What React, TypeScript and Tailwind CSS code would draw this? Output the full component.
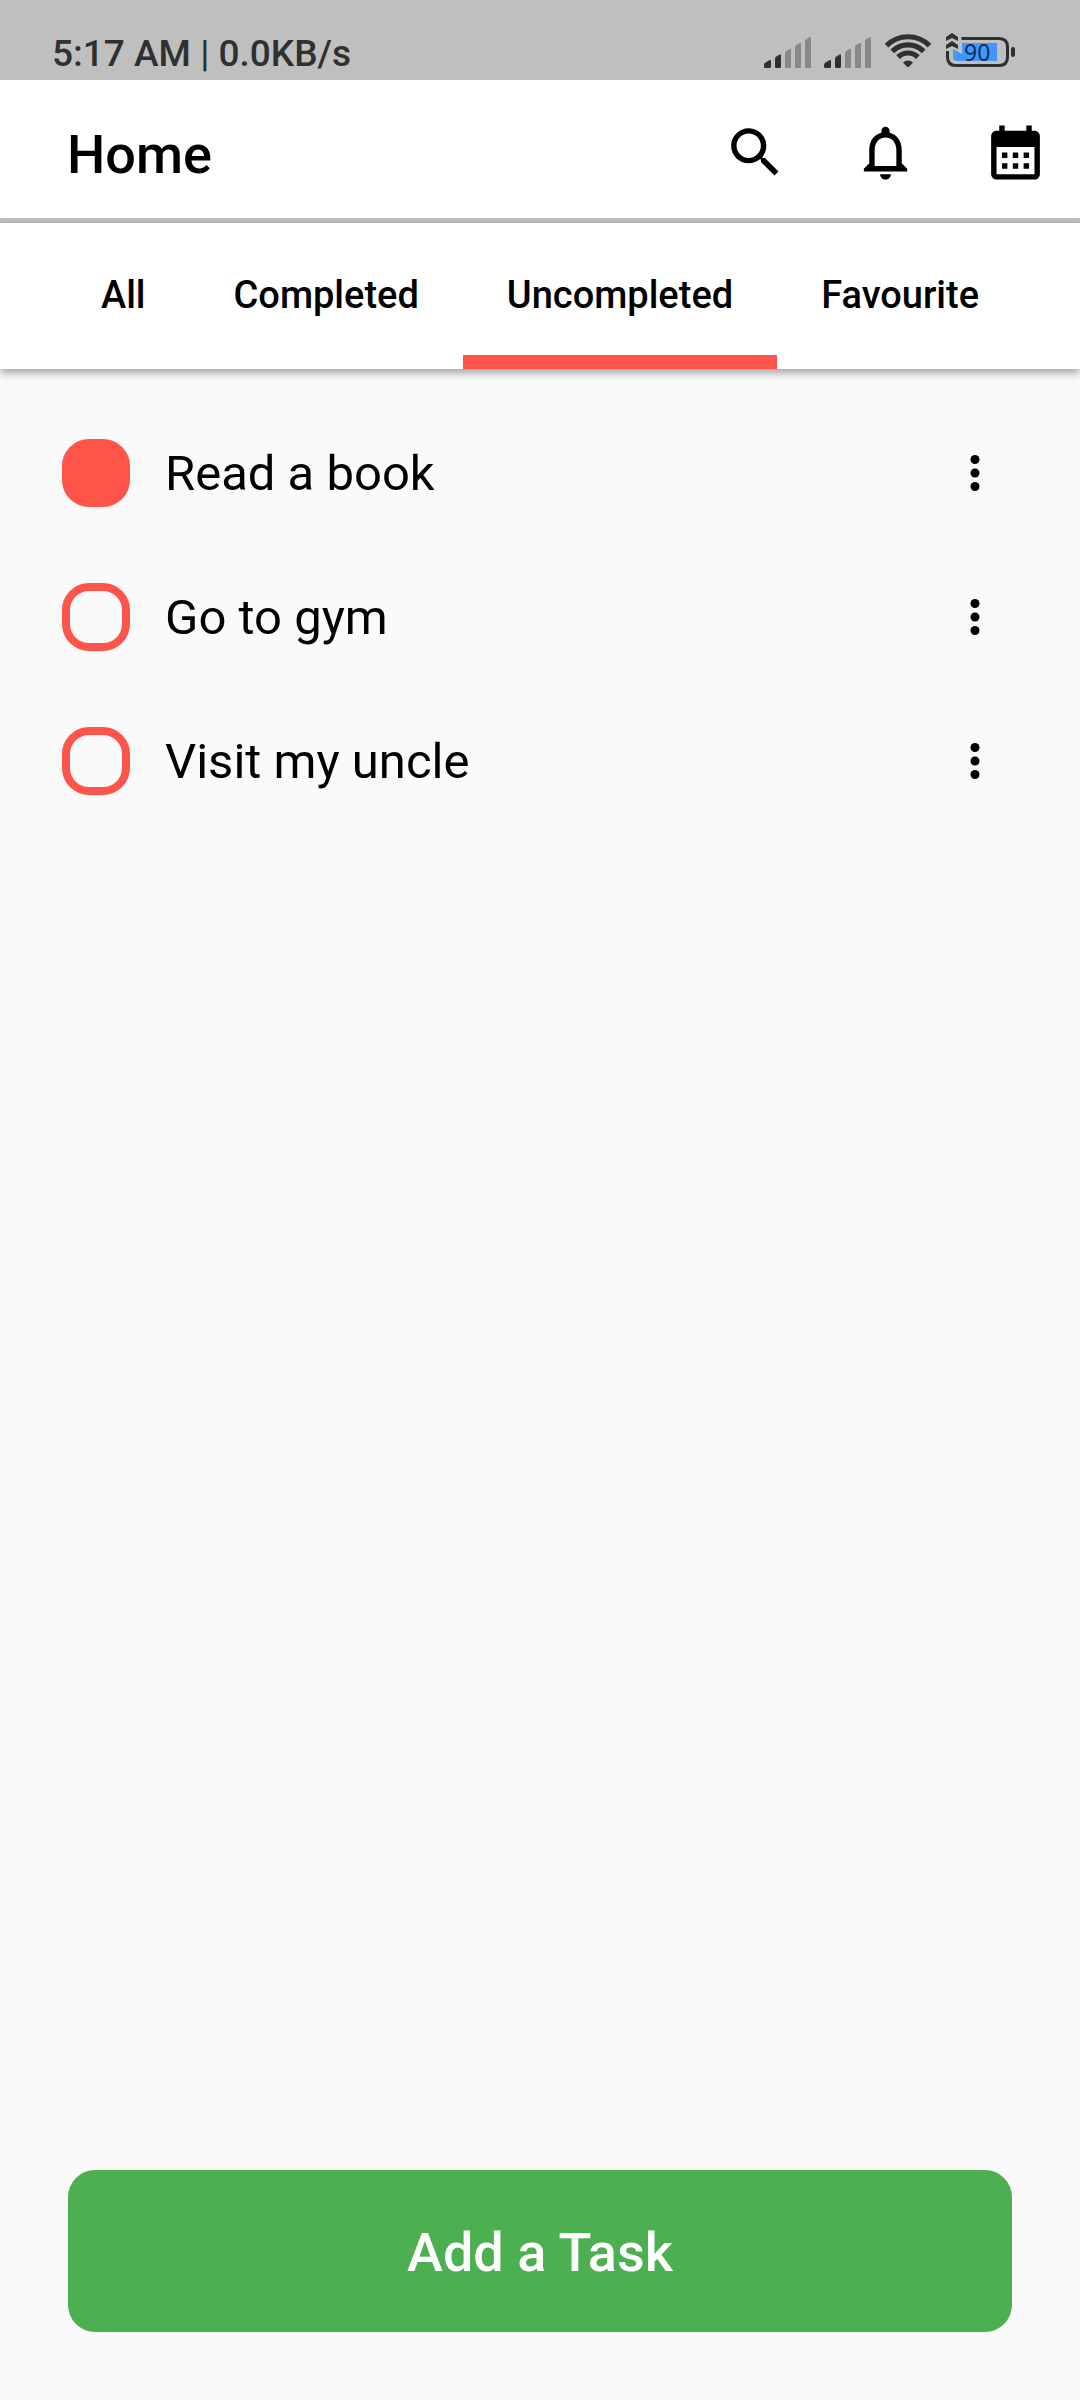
import { useState } from "react";

function Bars({ className }: { className: string }) {
  return (
    <svg viewBox="0 0 48 31" className={className} aria-hidden="true">
      <path fill="#303030" d="M0 28q0-1.500 1.200-2.300l4-2.400q1.800-.8 1.800 1v5.200q0 1.500-1.500 1.500h-4q-1.500 0-1.500-1.500z" />
      <path fill="#303030" d="M11 22q0-1.500 1-2.200l3.600-2.300q1.400-.6 1.400 1v11q0 1.500-1.500 1.500h-3q-1.500 0-1.500-1.500z" />
      <g fill="#878787">
        <path d="M21 16.500q0-1.500 1-2.200l3.600-2.300q1.400-.6 1.400 1v16.500q0 1.500-1.500 1.500h-3q-1.500 0-1.500-1.500z" />
        <path d="M31 10.500q0-1.500 1-2.200l3.600-2.300q1.400-.6 1.400 1v22.500q0 1.500-1.500 1.500h-3q-1.500 0-1.500-1.500z" />
        <path d="M41 4.500q0-1.500 1-2.200l3.600-2.100q1.400-.6 1.400 1v28.300q0 1.500-1.500 1.500h-3q-1.500 0-1.500-1.500z" />
      </g>
    </svg>
  );
}

function Wifi() {
  return (
    <svg viewBox="0 0 48 34" className="h-[34px] w-[48px]" aria-hidden="true">
      <g fill="none" stroke="#303030" strokeWidth="5.2">
        <path d="M2.600 11.600a30.300 30.300 0 0 1 42.800 0" />
        <path d="M8.300 17.300a22.200 22.200 0 0 1 31.400 0" />
        <path d="M14.100 23.100a14 14 0 0 1 19.800 0" />
      </g>
      <path fill="#303030" d="M19 28.500a7.200 7.200 0 0 1 10 0l-4 4.200q-1 .8-2 0z" />
    </svg>
  );
}

function Battery() {
  return (
    <div className="relative flex h-[36px] w-[70px] items-center">
      <svg viewBox="0 0 70 36" className="h-[36px] w-[70px]" aria-hidden="true">
        <path fill="#3f98ff" d="M7 17l9 5V11h35v18H11q-4 0-4-4z" />
        <path fill="none" stroke="#303030" strokeWidth="3" d="M15.500 6.500H53q8.500 0 8.500 8.500v10q0 8.500-8.500 8.500H10q-8.500 0-8.500-8.500V19" />
        <rect x="65" y="15" width="4" height="10" rx="2" fill="#303030" />
        <path fill="#303030" d="M0 5L6 1l6 4v4L6 6 0 9zM0 13l6-4 6 4v4l-6-3-6 3z" />
      </svg>
      <span className="absolute left-[18px] top-[8px] font-['Noto_Sans',sans-serif] text-[23px] leading-[24px] text-[#12304f]">90</span>
    </div>
  );
}

const actions = [
  {
    label: "Search",
    d: "M15.5 14h-.79l-.28-.27C15.41 12.59 16 11.11 16 9.5 16 5.91 13.09 3 9.5 3S3 5.91 3 9.5 5.91 16 9.5 16c1.61 0 3.09-.59 4.23-1.57l.27.28v.79l5 4.99L20.49 19l-4.99-5zm-6 0C7.01 14 5 11.99 5 9.5S7.01 5 9.5 5 14 7.01 14 9.5 11.99 14 9.5 14z",
  },
  {
    label: "Notifications",
    d: "M12 22c1.100 0 2-.9 2-2h-4c0 1.100.9 2 2 2zm6-6v-5c0-3.070-1.630-5.640-4.500-6.320V4c0-.83-.67-1.500-1.500-1.500s-1.500.67-1.500 1.500v.68C7.640 5.360 6 7.920 6 11v5l-2 2v1h16v-1l-2-2zm-2 1H8v-6c0-2.480 1.510-4.500 4-4.500s4 2.020 4 4.500v6z",
  },
  {
    label: "Calendar",
    d: "M19 4h-1V2h-2v2H8V2H6v2H5c-1.110 0-1.990.9-1.990 2L3 20a2 2 0 0 0 2 2h14c1.100 0 2-.9 2-2V6c0-1.100-.9-2-2-2zm0 16H5V10h14v10zM9 14H7v-2h2v2zm4 0h-2v-2h2v2zm4 0h-2v-2h2v2zm-8 4H7v-2h2v2zm4 0h-2v-2h2v2zm4 0h-2v-2h2v2z",
  },
];

const tabs = ["All", "Completed", "Uncompleted", "Favourite"];

const initialTasks = [
  { title: "Read a book", checked: true },
  { title: "Go to gym", checked: false },
  { title: "Visit my uncle", checked: false },
];

export default function App() {
  const [active, setActive] = useState("Uncompleted");
  const [tasks, setTasks] = useState(initialTasks);
  const toggle = (title: string) =>
    setTasks(tasks.map((t) => (t.title === title ? { ...t, checked: !t.checked } : t)));

  return (
    <div className="flex min-h-screen flex-col bg-[#fafafa] font-[Roboto,sans-serif] text-black">
      <div className="flex h-20 items-end justify-between bg-[#bfbfbf] pl-[52px] pr-16">
        <span className="pb-1 text-[37px] leading-[44px] font-medium text-[#303030]">5:17 AM | 0.0KB/s</span>
        <div className="flex items-end pb-3">
          <Bars className="mr-3 h-[31px] w-[48px]" />
          <Bars className="mr-3 h-[31px] w-[48px]" />
          <Wifi />
          <div className="ml-3.5">
            <Battery />
          </div>
        </div>
      </div>

      <header className="flex h-[143px] items-center justify-between border-b-5 border-[#bdbdbd] bg-white pt-1.5 pl-[67px]">
        <h1 className="pt-1.5 text-[54px] leading-[64px] font-medium">Home</h1>
        <div className="flex">
          {actions.map((a) => (
            <button key={a.label} aria-label={a.label} className="flex h-[130px] w-[130px] items-center justify-center">
              <svg viewBox="0 0 24 24" fill="currentColor" className="h-[65px] w-[65px]">
                <path d={a.d} />
              </svg>
            </button>
          ))}
        </div>
      </header>

      <nav role="tablist" className="flex h-[146px] justify-center bg-white shadow-[0_4px_8px_rgba(0,0,0,0.35)]">
        {tabs.map((t) => (
          <button
            key={t}
            role="tab"
            aria-selected={t === active}
            onClick={() => setActive(t)}
            className={
              "border-b-14 px-11 pt-3 text-[38px] leading-[44px] font-medium " +
              (t === active ? "border-[#ff5449]" : "border-transparent")
            }
          >
            {t}
          </button>
        ))}
      </nav>

      <ul className="grow pt-8">
        {tasks.map((t) => (
          <li key={t.title} className="flex h-36 items-center pl-[62px] pr-[78px]">
            <label className="flex grow items-center gap-[35px] text-[49px] leading-[58px]">
              <input
                type="checkbox"
                checked={t.checked}
                onChange={() => toggle(t.title)}
                className="size-[68px] appearance-none rounded-[27px] border-8 border-[#ff5449] checked:bg-[#ff5449]"
              />
              <span className="pt-0.5">{t.title}</span>
            </label>
            <button aria-label={"Options for " + t.title} className="p-0">
              <svg viewBox="0 0 24 24" fill="currentColor" className="size-[54px]">
                <circle cx="12" cy="6" r="2" />
                <circle cx="12" cy="12" r="2" />
                <circle cx="12" cy="18" r="2" />
              </svg>
            </button>
          </li>
        ))}
      </ul>

      <button className="mx-[68px] mb-[68px] h-[162px] rounded-[27px] bg-[#4caf50] pt-1 text-[54px] leading-[64px] font-medium text-white">
        Add a Task
      </button>
    </div>
  );
}
